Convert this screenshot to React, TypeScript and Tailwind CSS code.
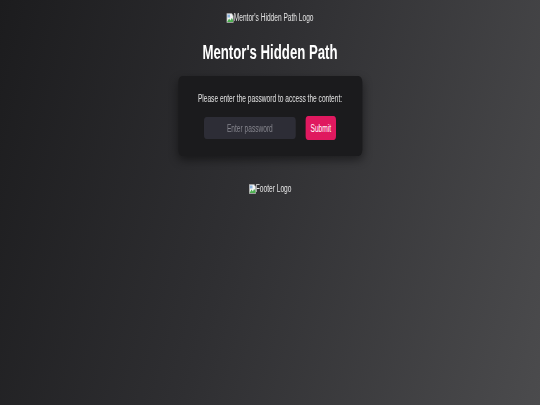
import React from 'react';

const sans = { fontFamily: '"Liberation Sans", Arial, sans-serif' };

const BrokenImage = () => (
  <svg width="11" height="10" viewBox="0 0 11 10" className="shrink-0">
    <path d="M0.5 0.5 H8 L10.5 3 V9.5 H0.5 Z" fill="#f4f4f4" stroke="#a0a0a0" strokeWidth="1" />
    <path d="M1 9 L4 5.5 L6 7.5 L8 5 L10 7 V9 Z" fill="#4caf50" />
    <rect x="1.5" y="1.5" width="4" height="3" fill="#8db4de" />
  </svg>
);

const AltImage = ({ alt }: { alt: string }) => (
  <div className="flex items-center text-[10px] leading-[11px] text-[#e4e4e4]">
    <BrokenImage />
    <span>{alt}</span>
  </div>
);

export default function App() {
  const [pw, setPw] = React.useState('');
  return (
    <div
      className="min-h-[405px] w-full overflow-hidden bg-[linear-gradient(105deg,#1c1c1e_0%,#2f2f32_45%,#4b4b4d_100%)]"
      style={sans}
    >
      {/* the whole column is squeezed sideways, like the source */}
      <div className="w-full flex flex-col items-center origin-center scale-x-[0.66]">
        <div className="mt-[12px]">
          <AltImage alt="Mentor's Hidden Path Logo" />
        </div>
        <h1 className="mt-[17px] text-[20px] leading-[24px] font-bold text-white">
          Mentor's Hidden Path
        </h1>
        <div className="mt-[12px] w-[279px] h-[80px] rounded-[6px] bg-[#1b1b1d] shadow-[0_4px_12px_rgba(0,0,0,0.45)] flex flex-col items-center pt-[17px]">
          <p className="text-[10px] leading-[12px] text-[#e2e2e2]">
            Please enter the password to access the content:
          </p>
          <div className="mt-[11px] flex items-center gap-[15px]">
            <input
              type="password"
              value={pw}
              onChange={(e) => setPw(e.target.value)}
              placeholder="Enter password"
              className="w-[139px] h-[22px] rounded-[4px] bg-[#2d2d36] text-center text-[10px] text-white placeholder:text-[#85858d] outline-none"
              style={sans}
            />
            <button
              className="w-[46px] h-[24px] rounded-[4px] bg-[#e0195f] text-white text-[10px]"
              style={sans}
            >
              Submit
            </button>
          </div>
        </div>
        <div className="mt-[27px]">
          <AltImage alt="Footer Logo" />
        </div>
      </div>
    </div>
  );
}
